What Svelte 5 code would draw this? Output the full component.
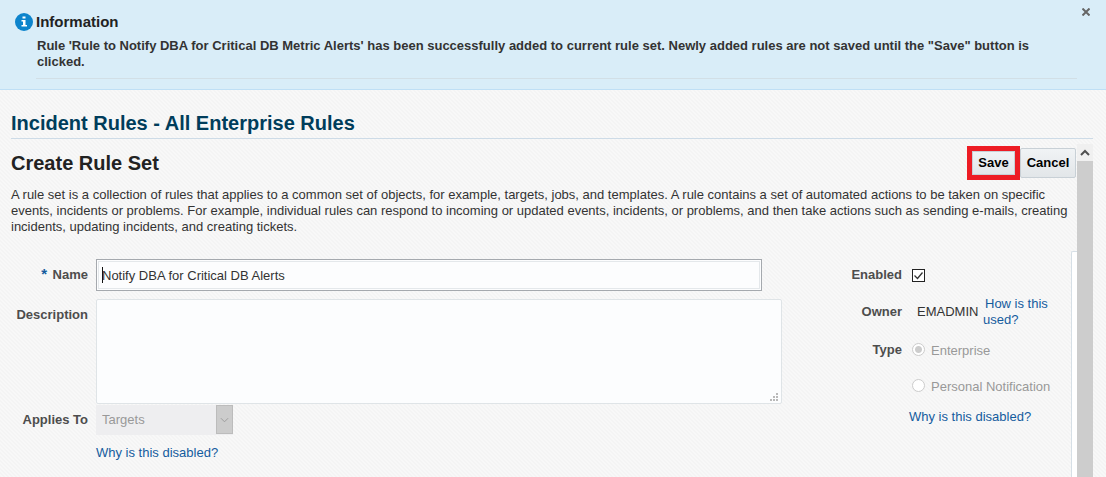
<script>
  let name = $state('Notify DBA for Critical DB Alerts');
  let description = $state('');
  let enabled = $state(true);
</script>

<div class="page">
  <section class="notice">
    <svg class="info" viewBox="0 0 18 18" aria-hidden="true">
      <circle cx="9" cy="9" r="9" fill="#0d84cc" />
      <path d="M7.500 3.500h3v2h-3zM6.500 7h4v5h1.500v1.500H6.500V12H8V8.500H6.500z" fill="#fff" />
    </svg>
    <div class="notice-text">
      <h2>Information</h2>
      <p>Rule 'Rule to Notify DBA for Critical DB Metric Alerts' has been successfully added to current rule set. Newly added rules are not saved until the "Save" button is clicked.</p>
    </div>
    <button class="close" aria-label="Close">
      <svg viewBox="0 0 8 8"><path d="M.5.5l7 7M7.5.5l-7 7" stroke="#666" stroke-width="2" /></svg>
    </button>
  </section>

  <main>
    <h1>Incident Rules - All Enterprise Rules</h1>
    <div class="scroller">
      <div class="content">
        <header>
          <h2>Create Rule Set</h2>
          <span class="highlight"><button class="btn">Save</button></span>
          <button class="btn cancel">Cancel</button>
        </header>
        <p class="intro">A rule set is a collection of rules that applies to a common set of objects, for example, targets, jobs, and templates. A rule contains a set of automated actions to be taken on specific events, incidents or problems. For example, individual rules can respond to incoming or updated events, incidents, or problems, and then take actions such as sending e-mails, creating incidents, updating incidents, and creating tickets.</p>

        <form>
          <div class="left">
            <label class="caption" for="name"><span class="star">*</span> Name</label>
            <input id="name" class="name" type="text" bind:value={name} />
            <label class="caption tall" for="description">Description</label>
            <div class="area">
              <textarea id="description" bind:value={description}></textarea>
              <svg class="grip" viewBox="0 0 8 8" aria-hidden="true">
                <path d="M6 0h2v2H6zM3 3h2v2H3zM6 3h2v2H6zM0 6h2v2H0zM3 6h2v2H3zM6 6h2v2H6z" fill="#b9b9b9" />
              </svg>
            </div>
            <label class="caption" for="applies">Applies To</label>
            <div class="select">
              <select id="applies" disabled><option>Targets</option></select>
              <span class="arrow"><svg viewBox="0 0 10 6"><path d="M1 1l4 4 4-4" fill="none" stroke="#999" /></svg></span>
            </div>
            <a class="help" href="#applies">Why is this disabled?</a>
          </div>

          <div class="right">
            <label class="caption" for="enabled">Enabled</label>
            <div class="cell"><input id="enabled" class="check" type="checkbox" bind:checked={enabled} /></div>
            <span class="caption">Owner</span>
            <div class="cell owner"><span>EMADMIN</span><a href="#owner">How is this used?</a></div>
            <span class="caption">Type</span>
            <label class="cell option"><input type="radio" name="type" checked disabled /><span>Enterprise</span></label>
            <label class="cell option second"><input type="radio" name="type" disabled /><span>Personal Notification</span></label>
            <a class="why" href="#type">Why is this disabled?</a>
          </div>
          <div class="panel"></div>
        </form>
      </div>
      <div class="bar">
        <svg viewBox="0 0 16 17"><path d="M4 11l4-4 4 4" fill="none" stroke="#505050" stroke-width="2" /></svg>
        <div class="thumb"></div>
      </div>
    </div>
  </main>
</div>

<style>
  :global(body) {
    font: 13px/16px "Liberation Sans", Arial, sans-serif;
    color: #333;
  }
  * { box-sizing: border-box; }
  h1, h2, p { margin: 0; }
  button, input, textarea, select { font: inherit; color: inherit; margin: 0; }
  a { color: #145c9e; text-decoration: none; }
  .page {
    display: flex;
    flex-direction: column;
    min-height: 100vh;
    background: linear-gradient(45deg, #f8f8f8 25%, #f4f4f4 25% 50%, #f8f8f8 50% 75%, #f4f4f4 75%) 0 0 / 4px 4px;
  }
  .notice {
    display: flex;
    position: relative;
    padding: 13px 29px 10px 15px;
    background: #d9edf8;
    border-bottom: 1px solid #bfdff5;
  }
  .info { width: 18px; height: 18px; margin-right: 3px; flex: none; }
  .notice-text { flex: 1; border-bottom: 1px solid #d2dfe6; padding-bottom: 8px; }
  .notice h2 { font-size: 15px; line-height: 18px; color: #222; }
  .notice p { font-weight: bold; padding: 7px 24px 0 1px; }
  .close {
    position: absolute;
    right: 16px;
    top: 8px;
    display: flex;
    padding: 0;
    border: 0;
    background: none;
  }
  .close svg { width: 8px; height: 8px; }
  main { flex: 1; display: flex; flex-direction: column; padding: 18px 13px 0 11px; }
  h1 { font-size: 20px; line-height: 30px; color: #003d5b; border-bottom: 1px solid #cddbe7; }
  .scroller { flex: 1; display: flex; padding-top: 5px; }
  .content { flex: 1; min-width: 0; display: flex; flex-direction: column; }
  header { display: flex; align-items: flex-start; padding: 2px 1px 0 0; height: 38px; }
  header h2 { flex: 1; font-size: 20px; line-height: 34px; color: #222; }
  .highlight { display: flex; border: 5px solid #ed1c24; height: 34px; width: 53px; }
  .btn {
    flex: 1;
    padding: 0;
    font-weight: bold;
    color: #000;
    border: 1px solid #c8d0d6;
    background: linear-gradient(#f0f3f5, #e2e6e9);
  }
  .cancel { flex: none; width: 56px; height: 30px; margin-top: 2px; border-radius: 2px; }
  .intro { padding-top: 5px; }
  form { flex: 1; display: flex; margin-top: 16px; }
  .left {
    flex: 1;
    display: grid;
    grid-template-columns: 77px 1fr;
    grid-template-rows: 32px 113px 31px auto;
    column-gap: 8px;
    padding-top: 8px;
    align-content: start;
  }
  .caption { font-weight: bold; color: #4d4d4d; text-align: right; padding-top: 8px; }
  .tall { padding-top: 16px; }
  .star { color: #145c9e; font-size: 15px; margin-right: 2px; line-height: 12px; }
  .name {
    height: 32px;
    margin-right: 20px;
    padding: 0 5px;
    border: 1px solid #a5a9ae;
    outline: 0;
    box-shadow: inset 0 0 0 1px #fcfdfe, inset 0 0 0 2px #e4e8eb;
    background: linear-gradient(#111, #111) 5px 7px / 1px 16px no-repeat #fcfdfe;
  }
  .area { position: relative; display: flex; padding-top: 8px; }
  textarea {
    flex: 1;
    resize: none;
    border: 1px solid #dfe4e7;
    border-radius: 2px;
    background: #fcfdfe;
  }
  .grip { position: absolute; right: 4px; bottom: 3px; width: 8px; height: 8px; }
  .select { position: relative; width: 137px; height: 30px; margin-top: 1px; }
  select {
    appearance: none;
    width: 100%;
    height: 30px;
    padding: 0 6px;
    border: 0;
    background: #eeeef0;
    color: #999;
    opacity: 1;
  }
  .arrow {
    position: absolute;
    right: 0;
    top: 0;
    width: 17px;
    height: 29px;
    display: grid;
    place-items: center;
    background: #ccc;
    border: 1px solid #bcbcbc;
    pointer-events: none;
  }
  .arrow svg { width: 9px; height: 6px; }
  .help { grid-column: 2; padding-top: 10px; }
  .right {
    display: grid;
    grid-template-columns: 120px 159px;
    grid-template-rows: 37px 38px 36px 33px auto;
    column-gap: 10px;
    padding-top: 8px;
    align-content: start;
  }
  .check {
    appearance: none;
    display: block;
    width: 13px;
    height: 13px;
    margin-top: 10px;
    border: 1px solid #222;
    background: #fff;
  }
  .check:checked {
    background: #fff url("data:image/svg+xml,%3Csvg xmlns='http://www.w3.org/2000/svg' viewBox='0 0 11 11'%3E%3Cpath d='M1.500 5.500l3 3 5-6' fill='none' stroke='%23333' stroke-width='1.300'/%3E%3C/svg%3E");
  }
  .owner { display: flex; padding-left: 5px; }
  .owner span { padding-top: 8px; width: 66px; }
  .owner a { width: 76px; text-indent: 2px; }
  .option { display: flex; align-items: flex-start; color: #999; padding-top: 9px; gap: 6px; }
  .option.second { grid-column: 2; }
  .option input {
    appearance: none;
    width: 13px;
    height: 13px;
    border: 1px solid #ccc;
    border-radius: 50%;
    background: #fff;
  }
  .option input:checked { background: radial-gradient(circle, #ccc 3px, #fff 4px); }
  .why { grid-column: 2; margin-left: -3px; padding-top: 6px; }
  .panel { width: 6px; border: 1px solid #d6dfe6; border-width: 1px 0 0 1px; background: #fff; border-radius: 2px 0 0 0; }
  .bar { width: 16px; display: flex; flex-direction: column; background: #f0f0f0; }
  .bar svg { width: 16px; height: 17px; flex: none; }
  .thumb { flex: 1; background: #cdcdcd; }
</style>
